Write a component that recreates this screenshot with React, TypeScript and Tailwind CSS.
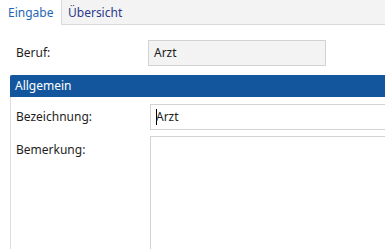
export default function App() {
  return (
    <div className="w-[385px] h-[249px] overflow-hidden bg-white text-[12px] text-[#1e1e1e] font-['Noto_Sans',sans-serif]">
      {/* Tabs */}
      <div className="flex h-[25px]">
        <div className="w-[61px] bg-white pl-[8px] pt-[4px] text-[#1f66b5]">Eingabe</div>
        <div className="flex-1 bg-[#f3f3f3] border-l border-b border-[#d9d9d9] pl-[6px] pt-[4px] text-[#2c3a8a]">
          Übersicht
        </div>
      </div>

      {/* Beruf */}
      <div className="flex items-center h-[26px] mt-[15px]">
        <div className="w-[148px] pl-[16px]">Beruf:</div>
        <div className="w-[178px] h-[26px] bg-[#f3f3f3] border border-[#d3d3d3] flex items-center pl-[5px]">Arzt</div>
      </div>

      {/* Allgemein panel */}
      <div className="ml-[10px] mt-[9px] border-l border-[#dedede] h-[200px]">
        <div className="h-[22px] bg-[#14569e] text-white pl-[5px] flex items-center rounded-tl-[2px] -ml-px">
          Allgemein
        </div>
        <div className="flex items-center h-[26px] mt-[7px]">
          <div className="w-[139px] pl-[5px]">Bezeichnung:</div>
          <div className="flex-1 h-[26px] border border-[#d3d3d3] border-r-0 flex items-center pl-[5px]">
            <span className="w-px h-[16px] bg-black -mr-px" />
            Arzt
          </div>
        </div>
        <div className="flex mt-[6px]">
          <div className="w-[139px] pl-[5px] pt-[5px]">Bemerkung:</div>
          <div className="flex-1 h-[120px] border border-[#d3d3d3] border-r-0 border-b-0" />
        </div>
      </div>
    </div>
  );
}
